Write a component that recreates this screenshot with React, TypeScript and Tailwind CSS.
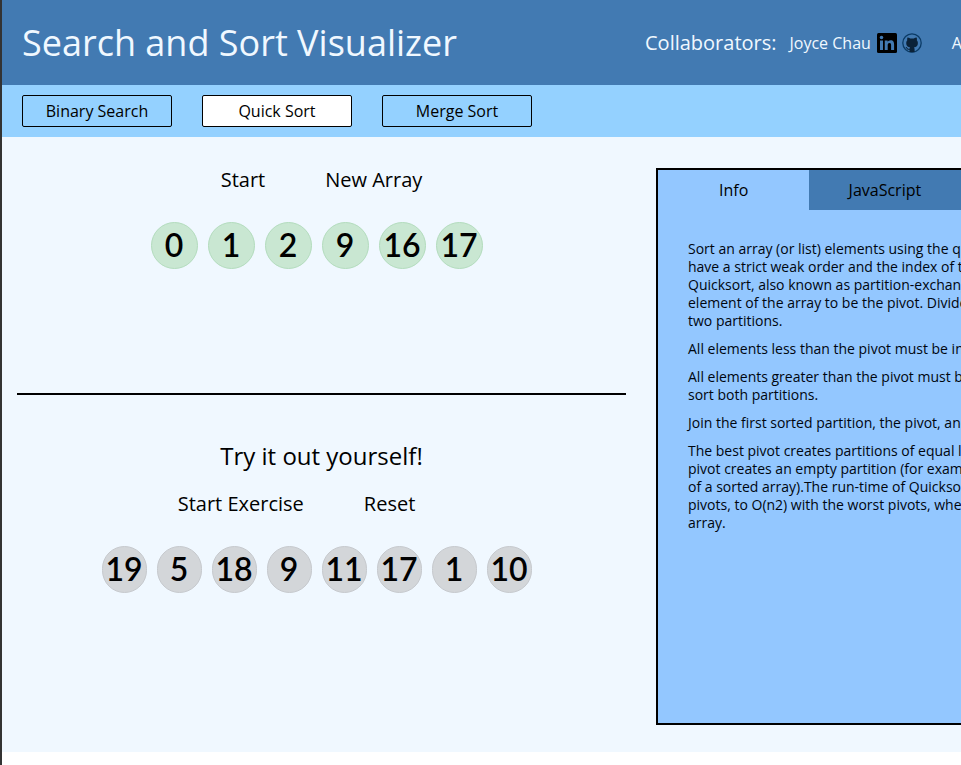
const algorithms = ["Binary Search", "Quick Sort", "Merge Sort"];
const sortedValues = [0, 1, 2, 9, 16, 17];
const exerciseValues = [19, 5, 18, 9, 11, 17, 1, 10];

const info: string[][] = [
  [
    "Sort an array (or list) elements using the quick",
    "have a strict weak order and the index of the",
    "Quicksort, also known as partition-exchange",
    "element of the array to be the pivot. Divide",
    "two partitions.",
  ],
  ["All elements less than the pivot must be in"],
  ["All elements greater than the pivot must be", "sort both partitions."],
  ["Join the first sorted partition, the pivot, and"],
  [
    "The best pivot creates partitions of equal length",
    "pivot creates an empty partition (for example",
    "of a sorted array).The run-time of Quicksort",
    "pivots, to O(n2) with the worst pivots, when",
    "array.",
  ],
];

function LinkedinMark() {
  return (
    <svg viewBox="0 0 40 40" className="size-5" aria-hidden="true">
      <rect width="40" height="40" rx="3" fill="#000" />
      <g fill="#427ab2">
        <circle cx="9" cy="9" r="3.5" />
        <path d="M6 15h6v19H6z" />
        <path d="M15.500 15h5.700v2.600c.9-1.600 2.900-3.100 5.800-3.100 6 0 7.200 3.900 7.200 9V34h-6v-9.200c0-2.300-.1-5-3.200-5s-3.600 2.400-3.600 4.900V34h-5.900z" />
      </g>
    </svg>
  );
}

function GithubMark() {
  return (
    <svg viewBox="0 0 40 40" className="size-5" aria-hidden="true">
      <circle cx="20" cy="20" r="18.4" fill="none" stroke="#0b3b66" strokeWidth="2.6" />
      <path
        fill="#0b2238"
        d="M15 38.5v-5.200c-3.400.7-5.200-.6-6.200-2.800-.5-1.100-1.100-1.700-2-2.300 2.200-.5 3.400.8 4.300 2.100.9 1.300 2.200 1.700 4 1.200.2-1.200.7-2 1.300-2.600-4.700-.6-8-3-8-9 0-2.300.8-4.100 2.100-5.500-.4-1.600-.4-3.500.4-5.400 2.100.1 4 1 5.600 2.200 2.300-.6 4.900-.6 7.200 0 1.600-1.200 3.500-2.100 5.600-2.200.8 1.900.8 3.800.4 5.400 1.300 1.400 2.100 3.200 2.100 5.500 0 6-3.300 8.400-8 9 .9.900 1.400 2.100 1.400 3.900v5.700z"
      />
    </svg>
  );
}

function Ball({ value, tone }: { value: number; tone: "sorted" | "idle" }) {
  const look =
    tone === "sorted"
      ? "w-[47px] border-[#b3dcbd] bg-[#c9e7d2]"
      : "w-[45px] border-[#c6c9cd] bg-[#d3d6d9]";
  return (
    <li
      className={`mr-2.5 flex h-[47px] items-center justify-center rounded-full border pb-0.5 font-[Lato,sans-serif] text-[32px] leading-8 font-semibold ${look}`}
    >
      {value}
    </li>
  );
}

export default function App() {
  return (
    <div className="min-h-screen overflow-x-hidden bg-white font-['Open_Sans',sans-serif] text-black">
      <div className="min-h-screen min-w-[1280px] border-l-2 border-[#333333]">
        <header className="grid h-[85px] grid-cols-2 items-center bg-[#427ab2] text-[#f0f8ff]">
          <h1 className="pl-5 text-4xl">Search and Sort Visualizer</h1>
          <div className="flex items-center pl-1">
            <h2 className="mr-[13px] text-xl">Collaborators:</h2>
            <span className="mr-1.5 text-base">Joyce Chau</span>
            <a href="#linkedin" aria-label="Joyce Chau on LinkedIn" className="mr-[5px]">
              <LinkedinMark />
            </a>
            <a href="#github" aria-label="Joyce Chau on GitHub">
              <GithubMark />
            </a>
            <span className="ml-[30px] text-base">A</span>
          </div>
        </header>

        <nav className="flex gap-[30px] bg-[#94d1ff] px-5 py-2.5">
          {algorithms.map((name) => (
            <button
              key={name}
              type="button"
              className={`h-8 w-[150px] rounded-xs border border-black text-base ${
                name === "Quick Sort" ? "bg-white" : ""
              }`}
            >
              {name}
            </button>
          ))}
        </nav>

        <main className="grid grid-cols-2 bg-[#f0f8ff]">
          <div className="px-[15px]">
            <section className="border-b-2 border-black pt-[29px] pb-31">
              <div className="flex justify-center gap-[60px] text-xl">
                <button type="button">Start</button>
                <button type="button">New Array</button>
              </div>
              <ul className="mt-7 flex justify-center">
                {sortedValues.map((v) => (
                  <Ball key={v} value={v} tone="sorted" />
                ))}
              </ul>
            </section>

            <section className="pt-[45px]">
              <h2 className="text-center text-2xl">Try it out yourself!</h2>
              <div className="mt-[18px] flex justify-center gap-[60px] pr-[50px] text-xl">
                <button type="button">Start Exercise</button>
                <button type="button">Reset</button>
              </div>
              <ul className="mt-7 flex justify-center">
                {exerciseValues.map((v) => (
                  <Ball key={v} value={v} tone="idle" />
                ))}
              </ul>
            </section>
          </div>

          <section className="mx-[15px] mt-[31px] mb-[27px] min-h-[557px] border-2 border-black bg-[#93c7ff]">
            <div role="tablist" className="flex h-10 bg-[#427ab2]">
              <button type="button" role="tab" aria-selected="true" className="w-1/4 bg-[#93c7ff] text-base">
                Info
              </button>
              <button type="button" role="tab" aria-selected="false" className="w-1/4 text-base">
                JavaScript
              </button>
            </div>
            <div className="space-y-2.5 p-[30px] text-sm leading-[18px] whitespace-nowrap text-[#00060f]">
              {info.map((lines) => (
                <p key={lines[0]}>
                  {lines.map((line) => (
                    <span key={line} className="block">
                      {line}
                    </span>
                  ))}
                </p>
              ))}
            </div>
          </section>
        </main>
      </div>
    </div>
  );
}
